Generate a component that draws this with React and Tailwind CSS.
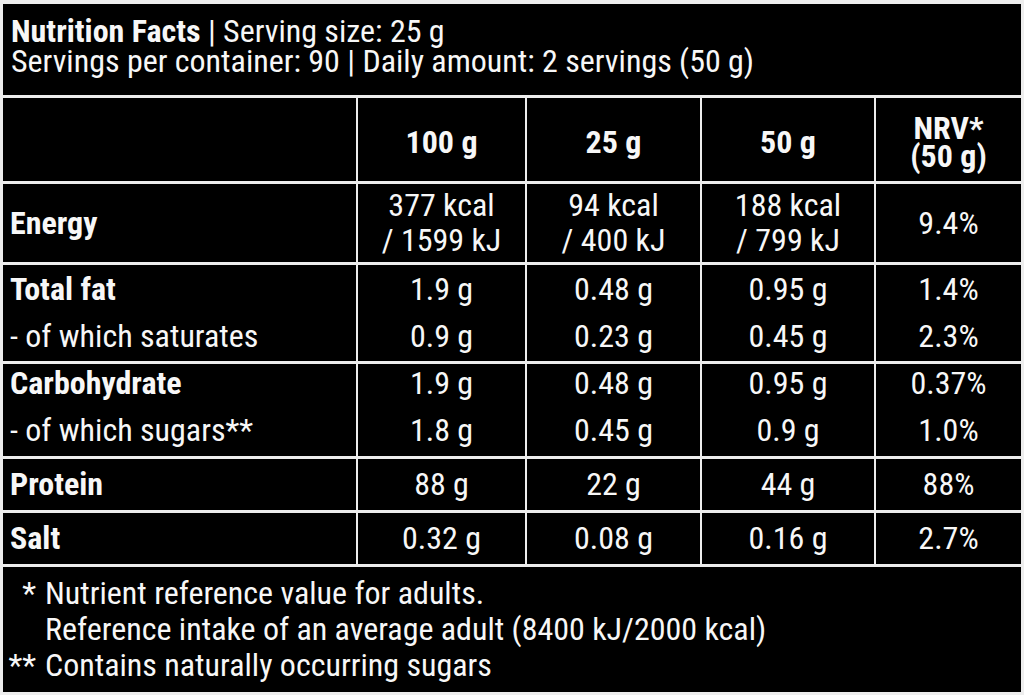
import React from "react";

const rows = [
  {
    label: ["Energy"],
    bold: [true],
    values: [
      ["377 kcal", "/ 1599 kJ"],
      ["94 kcal", "/ 400 kJ"],
      ["188 kcal", "/ 799 kJ"],
      ["9.4%"],
    ],
    leading: "leading-[35px]",
    shift: "",
  },
  {
    label: ["Total fat", "- of which saturates"],
    bold: [true, false],
    values: [
      ["1.9 g", "0.9 g"],
      ["0.48 g", "0.23 g"],
      ["0.95 g", "0.45 g"],
      ["1.4%", "2.3%"],
    ],
    leading: "leading-[47px]",
    shift: "",
  },
  {
    label: ["Carbohydrate", "- of which sugars**"],
    bold: [true, false],
    values: [
      ["1.9 g", "1.8 g"],
      ["0.48 g", "0.45 g"],
      ["0.95 g", "0.9 g"],
      ["0.37%", "1.0%"],
    ],
    leading: "leading-[47px]",
    shift: "pb-[6px]",
  },
  {
    label: ["Protein"],
    bold: [true],
    values: [["88 g"], ["22 g"], ["44 g"], ["88%"]],
    leading: "leading-[47px]",
    shift: "",
  },
  {
    label: ["Salt"],
    bold: [true],
    values: [["0.32 g"], ["0.08 g"], ["0.16 g"], ["2.7%"]],
    leading: "leading-[47px]",
    shift: "",
  },
];

export default function App() {
  return (
    <div className="w-[1024px] h-[695px] bg-[#eeeeee] px-[3px] pt-[4px] pb-[3px] flex flex-col gap-[3px] text-[#f7f7f7] font-['Liberation_Sans_Narrow','Roboto_Condensed','DejaVu_Sans_Condensed',sans-serif] text-[32px]">
      {/* Header */}
      <div className="h-[91px] shrink-0 bg-black pl-[8px] pt-[12px] leading-[30px]">
        <div>
          <span className="font-bold">Nutrition Facts</span> | Serving size: 25 g
        </div>
        <div>Servings per container: 90 | Daily amount: 2 servings (50 g)</div>
      </div>

      {/* Table */}
      <div className="grid grid-cols-[353px_167px_173px_172px_145px] grid-rows-[83px_78px_96px_92px_51px_51px] gap-x-[2px] gap-y-[3px] shrink-0">
        <div className="bg-black" />
        {["100 g", "25 g", "50 g"].map((h) => (
          <div
            key={h}
            className="bg-black flex items-center justify-center pt-[5px] font-bold"
          >
            {h}
          </div>
        ))}
        <div className="bg-black flex flex-col items-center justify-center pt-[4px] font-bold leading-[28px]">
          <div>NRV*</div>
          <div>(50 g)</div>
        </div>

        {rows.map((r) => (
          <React.Fragment key={r.label[0]}>
            <div
              className={`bg-black flex flex-col justify-center pl-[7px] ${r.leading} ${r.shift}`}
            >
              {r.label.map((l, i) => (
                <div key={l} className={r.bold[i] ? "font-bold" : ""}>
                  {l}
                </div>
              ))}
            </div>
            {r.values.map((v, ci) => (
              <div
                key={ci}
                className={`bg-black flex flex-col items-center justify-center ${r.leading} ${r.shift}`}
              >
                {v.map((t) => (
                  <div key={t}>{t}</div>
                ))}
              </div>
            ))}
          </React.Fragment>
        ))}
      </div>

      {/* Footer */}
      <div className="flex-1 bg-black pt-[8px] leading-[36px]">
        <div className="flex">
          <span className="w-[33px] text-right">*</span>
          <span className="ml-[9px]">Nutrient reference value for adults.</span>
        </div>
        <div className="pl-[42px]">
          Reference intake of an average adult (8400 kJ/2000 kcal)
        </div>
        <div className="flex">
          <span className="w-[33px] text-right">**</span>
          <span className="ml-[9px]">Contains naturally occurring sugars</span>
        </div>
      </div>
    </div>
  );
}
